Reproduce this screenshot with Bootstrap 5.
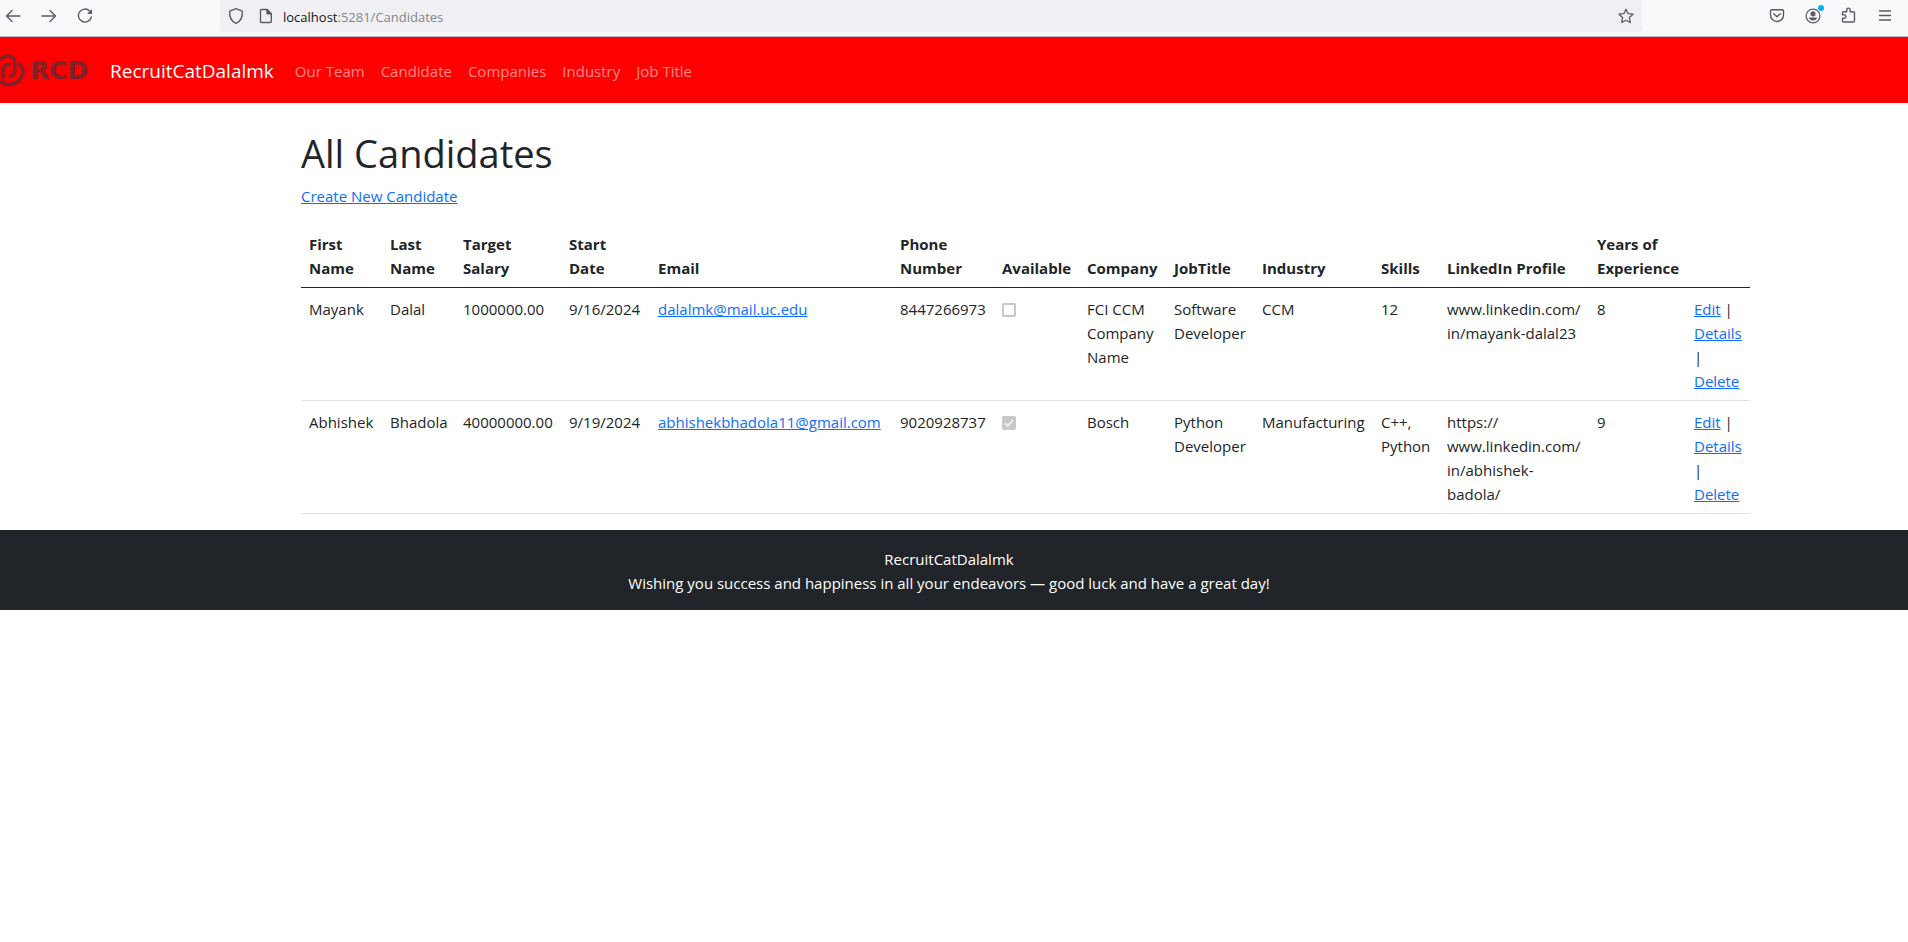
<!DOCTYPE html>
<html lang="en">
<head>
<meta charset="utf-8">
<meta name="viewport" content="width=device-width, initial-scale=1">
<title>All Candidates - RecruitCatDalalmk</title>
<link href="https://cdn.jsdelivr.net/npm/bootstrap@5.3.0/dist/css/bootstrap.min.css" rel="stylesheet">
<style>
  body { font-family: "Segoe UI", "Open Sans", sans-serif; font-size: 15px; line-height: 24px; overflow-x: hidden; }
  a { color: #0d6efd; }
  svg { display: block; }

  /* browser toolbar */
  .toolbar { background: #f9f9fb; border-bottom: 1px solid #bfb8bf; height: 37px; padding-right: 10px; color: #5b5b66; }
  .tool-set { gap: 10px; height: 32px; }
  .tool-btn { width: 26px; height: 26px; padding: 0; border: 0; background: none; color: inherit; display: flex; align-items: center; justify-content: center; position: relative; }
  .tool-btn .dot { position: absolute; top: 3px; right: 2px; width: 6px; height: 6px; border-radius: 50%; background: #00b3f4; }
  .tool-set .tool-btn { margin-bottom: 2px; }
  .address { background: #f0f0f4; height: 32px; margin: 0 122px; border-radius: 0 0 4px 4px; padding: 0 3px; }
  .address label, .address input { font-size: 13px; line-height: 20px; padding: 2px 0 0; border: 0; background: none; }
  .address label { color: #15141a; margin-left: 4px; }
  .address input { color: #85858c; outline: 0; min-width: 0; }

  /* site header */
  .site-nav { background: #f00; height: 66px; }
  .logo { width: 94px; color: #7c2229; overflow: hidden; margin-right: 16px; padding-top: 2px; }
  .logo-text { font: bold 25px/30px "DejaVu Sans", sans-serif; margin-left: 4px; }
  .site-nav .navbar-brand { font-size: 19px; color: #fff; margin-right: 13px; padding-top: 7px; }
  .site-nav .nav-link { color: rgba(255, 255, 255, .55); padding-top: 10px; }

  .page { padding-right: 10px; }
  h1 { font-size: 38px; line-height: 48px; font-weight: 400; padding-top: 2px; margin-bottom: 7px; }
  .create { margin-bottom: 15px; }
  .candidates { width: 1449px; table-layout: fixed; margin-bottom: 16px; }
  .candidates thead th { border-bottom-color: #212529; }
  .candidates th { vertical-align: bottom; }
  .candidates th, .candidates td { padding: 9px 8px 7px !important; }
  .candidates tbody { border-top: 0; }
  .tick { appearance: none; display: block; width: 14px; height: 14px; margin: 6px 0 0; border: 2px solid #c7c7cc; border-radius: 2px; background: #fff; }
  .tick:checked { background: #c7c7cc url("data:image/svg+xml,%3Csvg xmlns='http://www.w3.org/2000/svg' viewBox='0 0 10 10'%3E%3Cpath d='M1 5.4 3.7 8 9 2' fill='none' stroke='%23f4f4f6' stroke-width='1.8'/%3E%3C/svg%3E") center / 10px 10px no-repeat; }
  .site-footer { padding-top: 17px; padding-bottom: 15px; }
</style>
</head>
<body>
<div class="toolbar d-flex" role="toolbar" aria-label="Browser">
  <div class="tool-set d-flex align-items-center">
    <button class="tool-btn" type="button" aria-label="Back"><svg width="16" height="16" viewBox="0 0 16 16" fill="none" stroke="currentColor" stroke-width="1.4" stroke-linecap="round" stroke-linejoin="round"><path d="M15 9H1.500M7 3.500 1.500 9 7 14.500"/></svg></button>
    <button class="tool-btn" type="button" aria-label="Forward"><svg width="16" height="16" viewBox="0 0 16 16" fill="none" stroke="currentColor" stroke-width="1.4" stroke-linecap="round" stroke-linejoin="round"><path d="M1 9h13.500M9 3.500 14.500 9 9 14.500"/></svg></button>
    <button class="tool-btn" type="button" aria-label="Reload"><svg width="16" height="16" viewBox="0 0 16 16" fill="none" stroke="currentColor" stroke-width="1.4" stroke-linecap="round"><path d="M14.300 10A6.500 6.500 0 1 1 12.600 4"/><path d="M15 2v5h-5z" fill="currentColor" stroke="none"/></svg></button>
  </div>
  <div class="address d-flex flex-fill align-items-center">
    <button class="tool-btn" type="button" aria-label="Tracking protection"><svg width="16" height="18" viewBox="0 0 16 18" fill="none" stroke="currentColor" stroke-width="1.4" stroke-linejoin="round"><path d="M8 1.700 14.300 4.200C14.700 9.500 12.500 14.500 8 16.400 3.500 14.500 1.300 9.500 1.700 4.200Z"/></svg></button>
    <button class="tool-btn ms-1" type="button" aria-label="Site information"><svg width="14" height="16" viewBox="0 0 14 16" fill="none" stroke="currentColor" stroke-width="1.400" stroke-linejoin="round"><path d="M2.500 1.500h5.500l4.300 4.300V13.500q0 1-1 1H2.500q-1 0-1-1V2.500q0-1 1-1Z"/><path d="M8 1.500v4.300h4.300z" fill="currentColor"/></svg></button>
    <label for="url">localhost</label><input id="url" class="flex-fill" type="text" value=":5281/Candidates">
    <button class="tool-btn" type="button" aria-label="Bookmark this page"><svg width="16" height="16" viewBox="0 0 16 16" fill="none" stroke="currentColor" stroke-width="1.3" stroke-linejoin="round"><path d="m8 1.300 2 4.300 5 .6-3.600 3.300.9 5L8 12.200l-4.300 2.300.9-5L1 6.200l5-.6Z"/></svg></button>
  </div>
  <div class="tool-set d-flex align-items-center">
    <button class="tool-btn" type="button" aria-label="Save to Pocket"><svg width="16" height="16" viewBox="0 0 16 16" fill="none" stroke="currentColor" stroke-width="1.400" stroke-linecap="round" stroke-linejoin="round"><path d="M2.700 2.700h10.600q1.200 0 1.200 1.200V8a6.500 6.500 0 0 1-13 0V3.900q0-1.200 1.200-1.200Z"/><path d="m4.800 6.800 3.200 3 3.200-3"/></svg></button>
    <button class="tool-btn" type="button" aria-label="Account"><svg width="16" height="18" viewBox="0 0 16 18" fill="none" stroke="currentColor" stroke-width="1.300"><circle cx="8" cy="10" r="6.900"/><circle cx="8" cy="7.800" r="2.600" fill="currentColor" stroke="none"/><path d="M3.800 11.600h8.400q-1 3-4.200 3t-4.200-3Z" fill="currentColor" stroke="none"/></svg><span class="dot"></span></button>
    <button class="tool-btn" type="button" aria-label="Extensions"><svg width="16" height="18" viewBox="0 0 16 18" fill="none" stroke="currentColor" stroke-width="1.400" stroke-linejoin="round"><path d="M2.500 5.700h3.200V3.800a1.700 1.700 0 0 1 3.400 0v1.900h3.400q1 0 1 1V15q0 1-1 1H2.500q-1 0-1-1v-2.700h1.700a1.600 1.600 0 0 0 0-3.400H1.500V6.700q0-1 1-1Z"/></svg></button>
    <button class="tool-btn" type="button" aria-label="Open menu"><svg width="14" height="14" viewBox="0 0 14 14" stroke="currentColor" stroke-width="1.300" stroke-linecap="round"><path d="M1.500 3h11M1.500 7.500h11M1.500 12h11"/></svg></button>
  </div>
</div>

<header>
  <nav class="site-nav navbar navbar-expand navbar-dark p-0">
    <a class="logo d-flex align-items-center flex-shrink-0 text-decoration-none" href="#" aria-label="RCD home">
      <svg class="flex-shrink-0" width="26" height="34" viewBox="0 0 26 34" fill="none" stroke="currentColor" stroke-width="3.400"><path d="M0 6Q4 1.500 9 2 15 2.500 14.800 9V17Q14.500 22.500 8.500 22.500"/><path d="M11 10.500Q3.500 9.500 3 16V24.500"/><path d="M18 9.500Q23.500 12 23 19 21 30 9 30.500 4 30.500 0 27"/></svg>
      <span class="logo-text">RCD</span>
    </a>
    <a class="navbar-brand" href="#">RecruitCatDalalmk</a>
    <ul class="navbar-nav">
      <li class="nav-item"><a class="nav-link" href="#">Our Team</a></li>
      <li class="nav-item"><a class="nav-link" href="#">Candidate</a></li>
      <li class="nav-item"><a class="nav-link" href="#">Companies</a></li>
      <li class="nav-item"><a class="nav-link" href="#">Industry</a></li>
      <li class="nav-item"><a class="nav-link" href="#">Job Title</a></li>
    </ul>
  </nav>
</header>

<div class="page">
  <main class="container pt-4">
    <h1>All Candidates</h1>
    <p class="create"><a href="#">Create New Candidate</a></p>
    <table class="table candidates">
      <colgroup>
        <col style="width:81px"><col style="width:73px"><col style="width:106px"><col style="width:89px"><col style="width:242px"><col style="width:102px"><col style="width:85px"><col style="width:87px"><col style="width:88px"><col style="width:119px"><col style="width:66px"><col style="width:150px"><col style="width:97px"><col style="width:64px">
      </colgroup>
      <thead>
        <tr>
          <th>First Name</th><th>Last Name</th><th>Target Salary</th><th>Start<br>Date</th><th>Email</th><th>Phone Number</th><th>Available</th><th>Company</th><th>JobTitle</th><th>Industry</th><th>Skills</th><th class="text-nowrap">LinkedIn Profile</th><th>Years of Experience</th><th></th>
        </tr>
      </thead>
      <tbody>
        <tr>
          <td>Mayank</td><td>Dalal</td><td>1000000.00</td><td>9/16/2024</td>
          <td><a href="#">dalalmk@mail.uc.edu</a></td><td>8447266973</td>
          <td><input class="tick" type="checkbox" disabled aria-label="Available"></td>
          <td>FCI CCM Company Name</td><td>Software Developer</td><td>CCM</td><td>12</td>
          <td class="text-nowrap">www.linkedin.com/<br>in/mayank-dalal23</td><td>8</td>
          <td><a href="#">Edit</a> |<br><a href="#">Details</a><br>|<br><a href="#">Delete</a></td>
        </tr>
        <tr>
          <td>Abhishek</td><td>Bhadola</td><td>40000000.00</td><td>9/19/2024</td>
          <td><a href="#">abhishekbhadola11@gmail.com</a></td><td>9020928737</td>
          <td><input class="tick" type="checkbox" checked disabled aria-label="Available"></td>
          <td>Bosch</td><td>Python Developer</td><td>Manufacturing</td><td>C++, Python</td>
          <td class="text-nowrap">https://<br>www.linkedin.com/<br>in/abhishek-<br>badola/</td><td>9</td>
          <td><a href="#">Edit</a> |<br><a href="#">Details</a><br>|<br><a href="#">Delete</a></td>
        </tr>
      </tbody>
    </table>
  </main>
</div>

<footer class="page site-footer bg-dark text-white text-center">
  <div class="container">
    <div>RecruitCatDalalmk</div>
    <div>Wishing you success and happiness in all your endeavors — good luck and have a great day!</div>
  </div>
</footer>
<script src="https://cdn.jsdelivr.net/npm/bootstrap@5.3.0/dist/js/bootstrap.bundle.min.js"></script>
</body>
</html>
